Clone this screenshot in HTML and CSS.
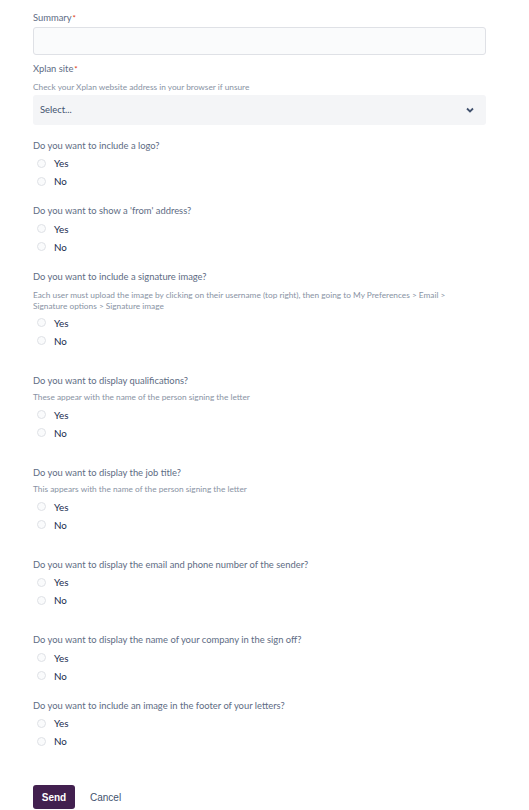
FILE: index.html
```html
<!DOCTYPE html>
<html lang="en">
<head>
<meta charset="utf-8">
<title>Request form</title>
<link rel="stylesheet" href="styles.css">
</head>
<body>
<form class="form">
  <div class="field">
    <div class="label">Summary<span class="req">*</span></div>
    <div class="input"></div>
  </div>
  <div class="field gap-s">
    <div class="label">Xplan site<span class="req">*</span></div>
    <div class="help help-top">Check your Xplan website address in your browser if unsure</div>
    <div class="select">
      <span>Select...</span>
      <svg class="chev" width="8" height="6" viewBox="0 0 8 6"><path d="M1 1.5 L4 4.5 L7 1.5" fill="none" stroke="#42526e" stroke-width="1.8"/></svg>
    </div>
  </div>

  <div class="field gap-m">
    <div class="q">Do you want to include a logo?</div>
    <div class="radio"><span class="dot"></span>Yes</div>
    <div class="radio"><span class="dot"></span>No</div>
  </div>

  <div class="field gap-m">
    <div class="q">Do you want to show a 'from' address?</div>
    <div class="radio"><span class="dot"></span>Yes</div>
    <div class="radio"><span class="dot"></span>No</div>
  </div>

  <div class="field gap-m">
    <div class="q">Do you want to include a signature image?</div>
    <div class="help help-sig">Each user must upload the image by clicking on their username (top right), then going to My Preferences &gt; Email &gt; Signature options &gt; Signature image</div>
    <div class="radio"><span class="dot"></span>Yes</div>
    <div class="radio"><span class="dot"></span>No</div>
  </div>

  <div class="field gap-l">
    <div class="q">Do you want to display qualifications?</div>
    <div class="help">These appear with the name of the person signing the letter</div>
    <div class="radio"><span class="dot"></span>Yes</div>
    <div class="radio"><span class="dot"></span>No</div>
  </div>

  <div class="field gap-l">
    <div class="q">Do you want to display the job title?</div>
    <div class="help">This appears with the name of the person signing the letter</div>
    <div class="radio"><span class="dot"></span>Yes</div>
    <div class="radio"><span class="dot"></span>No</div>
  </div>

  <div class="field gap-l">
    <div class="q">Do you want to display the email and phone number of the sender?</div>
    <div class="radio"><span class="dot"></span>Yes</div>
    <div class="radio"><span class="dot"></span>No</div>
  </div>

  <div class="field gap-l">
    <div class="q">Do you want to display the name of your company in the sign off?</div>
    <div class="radio"><span class="dot"></span>Yes</div>
    <div class="radio"><span class="dot"></span>No</div>
  </div>

  <div class="field gap-m">
    <div class="q">Do you want to include an image in the footer of your letters?</div>
    <div class="radio"><span class="dot"></span>Yes</div>
    <div class="radio"><span class="dot"></span>No</div>
  </div>

  <div class="actions">
    <button type="button" class="btn-send">Send</button>
    <button type="button" class="btn-cancel">Cancel</button>
  </div>
</form>
</body>
</html>
```

FILE: styles.css
```css
* { box-sizing: border-box; }
html, body { margin: 0; padding: 0; background: #ffffff; }
body {
  font-family: Lato, "Noto Sans", sans-serif;
  color: #172b4d;
}
.form {
  width: 453px;
  margin-left: 33px;
  padding-top: 12px;
  display: flex;
  flex-direction: column;
}
.field { display: flex; flex-direction: column; }
.gap-s { margin-top: 8px; }
.gap-m { margin-top: 15px; }
.gap-l { margin-top: 25px; }

.label, .q {
  font-size: 9.4px;
  line-height: 12px;
  color: #5e6c84;
}
.q { margin-bottom: 2.5px; }
.req { color: #de350b; margin-left: 1px; font-size: 8px; }
.input {
  margin-top: 3px;
  height: 28px;
  background: #fafbfc;
  border: 1.5px solid #dfe1e6;
  border-radius: 3px;
}
.help {
  font-size: 8.3px;
  line-height: 11px;
  color: #8993a4;
  margin-top: 3px;
  margin-bottom: 2.5px;
}
.help-sig { margin-top: 5px; margin-bottom: 1.5px; padding-right: 10px; }
.help-top { margin-top: 6.5px; margin-bottom: 2px; }
.select {
  height: 30px;
  background: #f4f5f7;
  border-radius: 3px;
  display: flex;
  align-items: center;
  justify-content: space-between;
  padding: 0 12px 0 7px;
  font-size: 9.4px;
  color: #42526e;
}
.chev { display: block; margin-top: 1px; }
.radio {
  height: 18px;
  display: flex;
  align-items: center;
  font-size: 9.8px;
  color: #172b4d;
  padding-left: 4px;
}
.dot {
  width: 9px;
  height: 9px;
  border-radius: 50%;
  border: 1px solid #dfe1e6;
  background: #fafbfc;
  margin-right: 8px;
}
.actions {
  margin-top: 35px;
  display: flex;
  align-items: center;
}
.btn-send {
  width: 42px;
  height: 24px;
  border: none;
  border-radius: 3px;
  background: #42204f;
  color: #ffffff;
  font-family: "Liberation Sans", Arial, sans-serif;
  font-weight: bold;
  font-size: 10px;
  padding: 0;
}
.btn-cancel {
  margin-left: 8px;
  border: none;
  background: transparent;
  color: #42526e;
  font-family: "Liberation Sans", Arial, sans-serif;
  font-size: 10px;
  padding: 0 7px;
  height: 24px;
}
```
